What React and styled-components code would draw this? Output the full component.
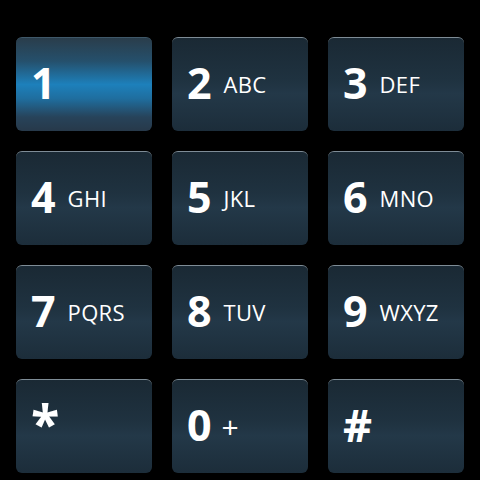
import React from 'react';
import styled, { createGlobalStyle, css } from 'styled-components';

const GlobalStyle = createGlobalStyle`
  html, body {
    margin: 0;
    padding: 0;
    background: #000;
  }
  body {
    font-family: "Open Sans", "DejaVu Sans", sans-serif;
  }
`;

const Pad = styled.div`
  width: 480px;
  height: 480px;
  box-sizing: border-box;
  padding: 37px 16px 8px 16px;
  background: #000;
  display: grid;
  grid-template-columns: repeat(3, 136px);
  grid-template-rows: repeat(4, 94px);
  column-gap: 20px;
  row-gap: 20px;
`;

const Key = styled.div`
  box-sizing: border-box;
  border-radius: 6px;
  border-top: 1px solid #7e8c96;
  display: flex;
  align-items: center;
  padding: 0 0 0 15px;
  color: #fff;
  background: linear-gradient(to bottom, #1a2934 0%, #1f3240 45%, #233848 60%, #1c2d3a 100%);

  ${p => p.pressed && css`
    border-top-color: #3f5869;
    background: linear-gradient(to bottom, #2a3d4b 0%, #25506c 25%, #1d80bb 50%, #1f6e9f 65%, #27435a 85%, #27394a 100%);
  `}
`;

const Digit = styled.span`
  font-size: 43px;
  font-weight: 700;
  line-height: 1;
  margin-top: -4px;

  ${p => p.sym === '*' && css`
    font-size: 52px;
    margin-top: -8px;
  `}
  ${p => p.sym === '#' && css`
    font-size: 45px;
  `}
`;

const Letters = styled.span`
  font-size: 22px;
  font-weight: 400;
  margin-left: 12px;
  margin-top: -2px;
  letter-spacing: 0.3px;

  ${p => p.plus && css`
    font-size: 30px;
    margin-left: 10px;
    margin-top: 0;
  `}
`;

const keys = [
  ['1', ''], ['2', 'ABC'], ['3', 'DEF'],
  ['4', 'GHI'], ['5', 'JKL'], ['6', 'MNO'],
  ['7', 'PQRS'], ['8', 'TUV'], ['9', 'WXYZ'],
  ['*', ''], ['0', '+'], ['#', ''],
];

export default function App() {
  return (
    <>
      <GlobalStyle />
      <Pad>
        {keys.map(([d, l]) => (
          <Key key={d} pressed={d === '1'}>
            <Digit sym={d}>{d}</Digit>
            {l && <Letters plus={l === '+'}>{l}</Letters>}
          </Key>
        ))}
      </Pad>
    </>
  );
}
